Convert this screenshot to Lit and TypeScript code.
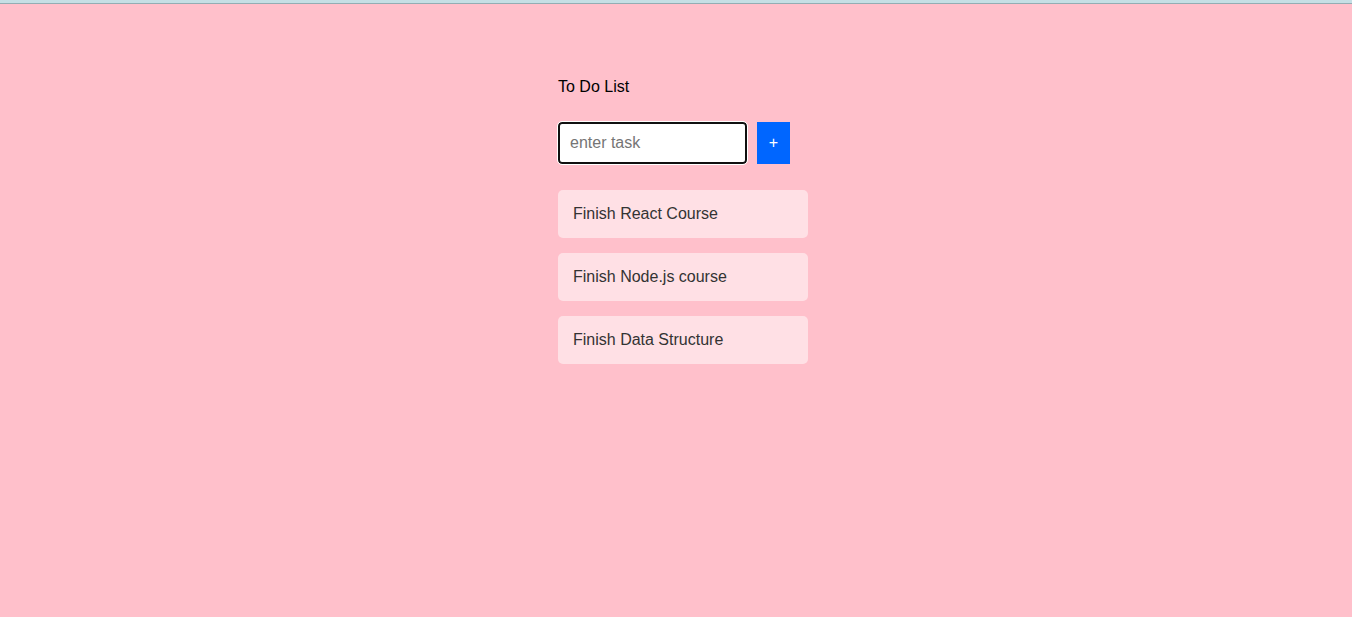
import { LitElement, html, css } from "lit";
import { customElement, state } from "lit/decorators.js";

@customElement("app-root")
export class AppRoot extends LitElement {
  static styles = css`
    :host {
      display: flex;
      flex-direction: column;
      min-height: 100vh;
      box-sizing: border-box;
      background: #ffc0cb;
      border-top: 3px solid #c5dfe5;
      font: 16px/18px "Liberation Sans", Arial, sans-serif;
      color: #000;
    }
    .edge {
      height: 1px;
      background: #93adb3;
    }
    .page {
      display: flex;
      justify-content: center;
      padding: 74px 0 24px 14px;
    }
    .todo {
      width: 250px;
    }
    .title {
      margin: 0 0 26px;
      font-size: 16px;
      font-weight: 400;
    }
    .entry {
      display: flex;
      gap: 10px;
      margin: 0 0 26px;
    }
    .task {
      box-sizing: border-box;
      width: 189px;
      height: 42px;
      padding: 0 10px;
      border: 2px solid #101010;
      border-radius: 4px;
      outline: 1px solid #fff;
      background: #fff;
      font: inherit;
      color: #000;
    }
    .task::placeholder {
      color: #757575;
    }
    .add {
      width: 33px;
      padding: 0;
      border: 0;
      background: #0066ff;
      color: #fff;
      font: inherit;
      cursor: pointer;
    }
    .list {
      display: flex;
      flex-direction: column;
      gap: 15px;
      margin: 0;
      padding: 0;
      list-style: none;
    }
    .item {
      padding: 15px;
      border-radius: 5px;
      background: #ffe0e5;
      color: #333;
    }
  `;

  @state() private tasks = [
    "Finish React Course",
    "Finish Node.js course",
    "Finish Data Structure",
  ];

  private addTask(event: Event) {
    event.preventDefault();
    const form = event.target as HTMLFormElement;
    const task = String(new FormData(form).get("task") ?? "").trim();
    if (!task) return;
    this.tasks = [...this.tasks, task];
    form.reset();
  }

  render() {
    return html`
      <div class="edge"></div>
      <main class="page">
        <section class="todo">
          <h1 class="title"><label for="task">To Do List</label></h1>
          <form class="entry" @submit=${this.addTask}>
            <input class="task" id="task" name="task" type="text" placeholder="enter task" autocomplete="off" />
            <button class="add" type="submit" aria-label="+">+</button>
          </form>
          <ul class="list">
            ${this.tasks.map((task) => html`<li class="item">${task}</li>`)}
          </ul>
        </section>
      </main>
    `;
  }
}
